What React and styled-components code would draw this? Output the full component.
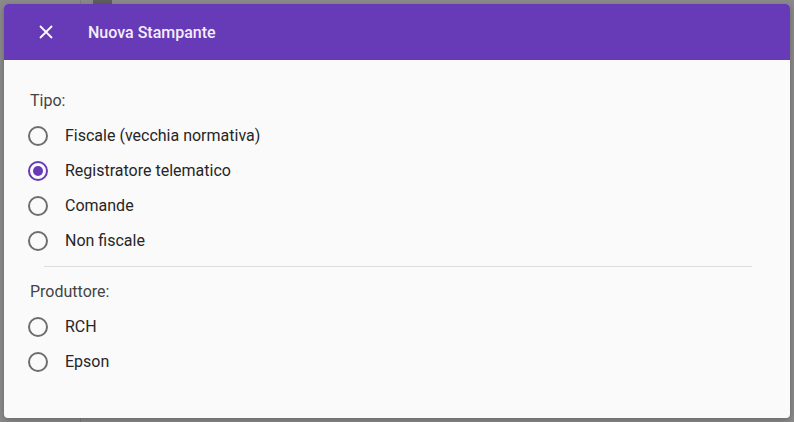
import React, { useState } from 'react'
import styled, { createGlobalStyle } from 'styled-components'

const GlobalStyle = createGlobalStyle`
  html, body {
    margin: 0;
    padding: 0;
    height: 100%;
  }
  body {
    font-family: Roboto, "Liberation Sans", Arial, sans-serif;
    background: #8a8a8a;
  }
  #root {
    height: 100%;
  }
`

const Backdrop = styled.div`
  box-sizing: border-box;
  height: 100vh;
  padding: 4px;
  display: flex;
  background:
    linear-gradient(#5e5e5e, #5e5e5e) 93px 0 / 19px 4px no-repeat,
    linear-gradient(#7c7c7c, #7c7c7c) 80px 0 / 1px 100% no-repeat,
    #8a8a8a;
`

const Dialog = styled.div`
  flex: 1;
  display: flex;
  flex-direction: column;
  background: #fafafa;
  border-radius: 4px;
  overflow: hidden;
  box-shadow: 0 2px 6px rgba(0, 0, 0, 0.25);
`

const Toolbar = styled.header`
  height: 56px;
  flex-shrink: 0;
  display: flex;
  align-items: center;
  background: #673ab7;
  color: #fff;
`

const CloseButton = styled.button`
  width: 84px;
  height: 56px;
  border: 0;
  padding: 0;
  background: transparent;
  color: #fff;
  display: flex;
  align-items: center;
  justify-content: center;
  cursor: pointer;
`

const Title = styled.h2`
  margin: 0;
  font-size: 16px;
  font-weight: 500;
  color: #f3eefb;
`

const Content = styled.div`
  padding: 29px 26px 0 22px;
`

const GroupLabel = styled.div`
  font-size: 16px;
  color: #444;
  padding-left: 4px;
  height: 24px;
  line-height: 24px;
  margin-bottom: 5px;
`

const Options = styled.div`
  display: flex;
  flex-direction: column;
`

const Option = styled.label`
  display: flex;
  align-items: center;
  height: 35px;
  font-size: 16px;
  color: #262626;
  cursor: pointer;
`

const Circle = styled.span`
  box-sizing: border-box;
  width: 20px;
  height: 20px;
  margin: 0 17px 0 2px;
  border-radius: 50%;
  border: 2px solid ${p => (p.checked ? '#673ab7' : '#6e6e6e')};
  display: flex;
  align-items: center;
  justify-content: center;

  &::after {
    content: '';
    width: 10px;
    height: 10px;
    border-radius: 50%;
    background: #673ab7;
    display: ${p => (p.checked ? 'block' : 'none')};
  }
`

const Divider = styled.hr`
  border: 0;
  border-top: 1px solid #dedede;
  margin: 8px 12px 13px 18px;
`

const RadioGroup = ({ label, options, value, onChange }) => (
  <div>
    <GroupLabel>{label}</GroupLabel>
    <Options>
      {options.map(opt => (
        <Option key={opt} onClick={() => onChange(opt)}>
          <Circle checked={value === opt} />
          {opt}
        </Option>
      ))}
    </Options>
  </div>
)

const CloseIcon = () => (
  <svg width="14" height="14" viewBox="0 0 14 14" fill="none">
    <path d="M1 1 L13 13 M13 1 L1 13" stroke="currentColor" strokeWidth="1.8" />
  </svg>
)

const tipi = ['Fiscale (vecchia normativa)', 'Registratore telematico', 'Comande', 'Non fiscale']
const produttori = ['RCH', 'Epson']

const App = () => {
  const [tipo, setTipo] = useState('Registratore telematico')
  const [produttore, setProduttore] = useState(null)

  return (
    <>
      <GlobalStyle />
      <Backdrop>
        <Dialog>
          <Toolbar>
            <CloseButton aria-label="Chiudi">
              <CloseIcon />
            </CloseButton>
            <Title>Nuova Stampante</Title>
          </Toolbar>
          <Content>
            <RadioGroup label="Tipo:" options={tipi} value={tipo} onChange={setTipo} />
            <Divider />
            <RadioGroup label="Produttore:" options={produttori} value={produttore} onChange={setProduttore} />
          </Content>
        </Dialog>
      </Backdrop>
    </>
  )
}

export default App
